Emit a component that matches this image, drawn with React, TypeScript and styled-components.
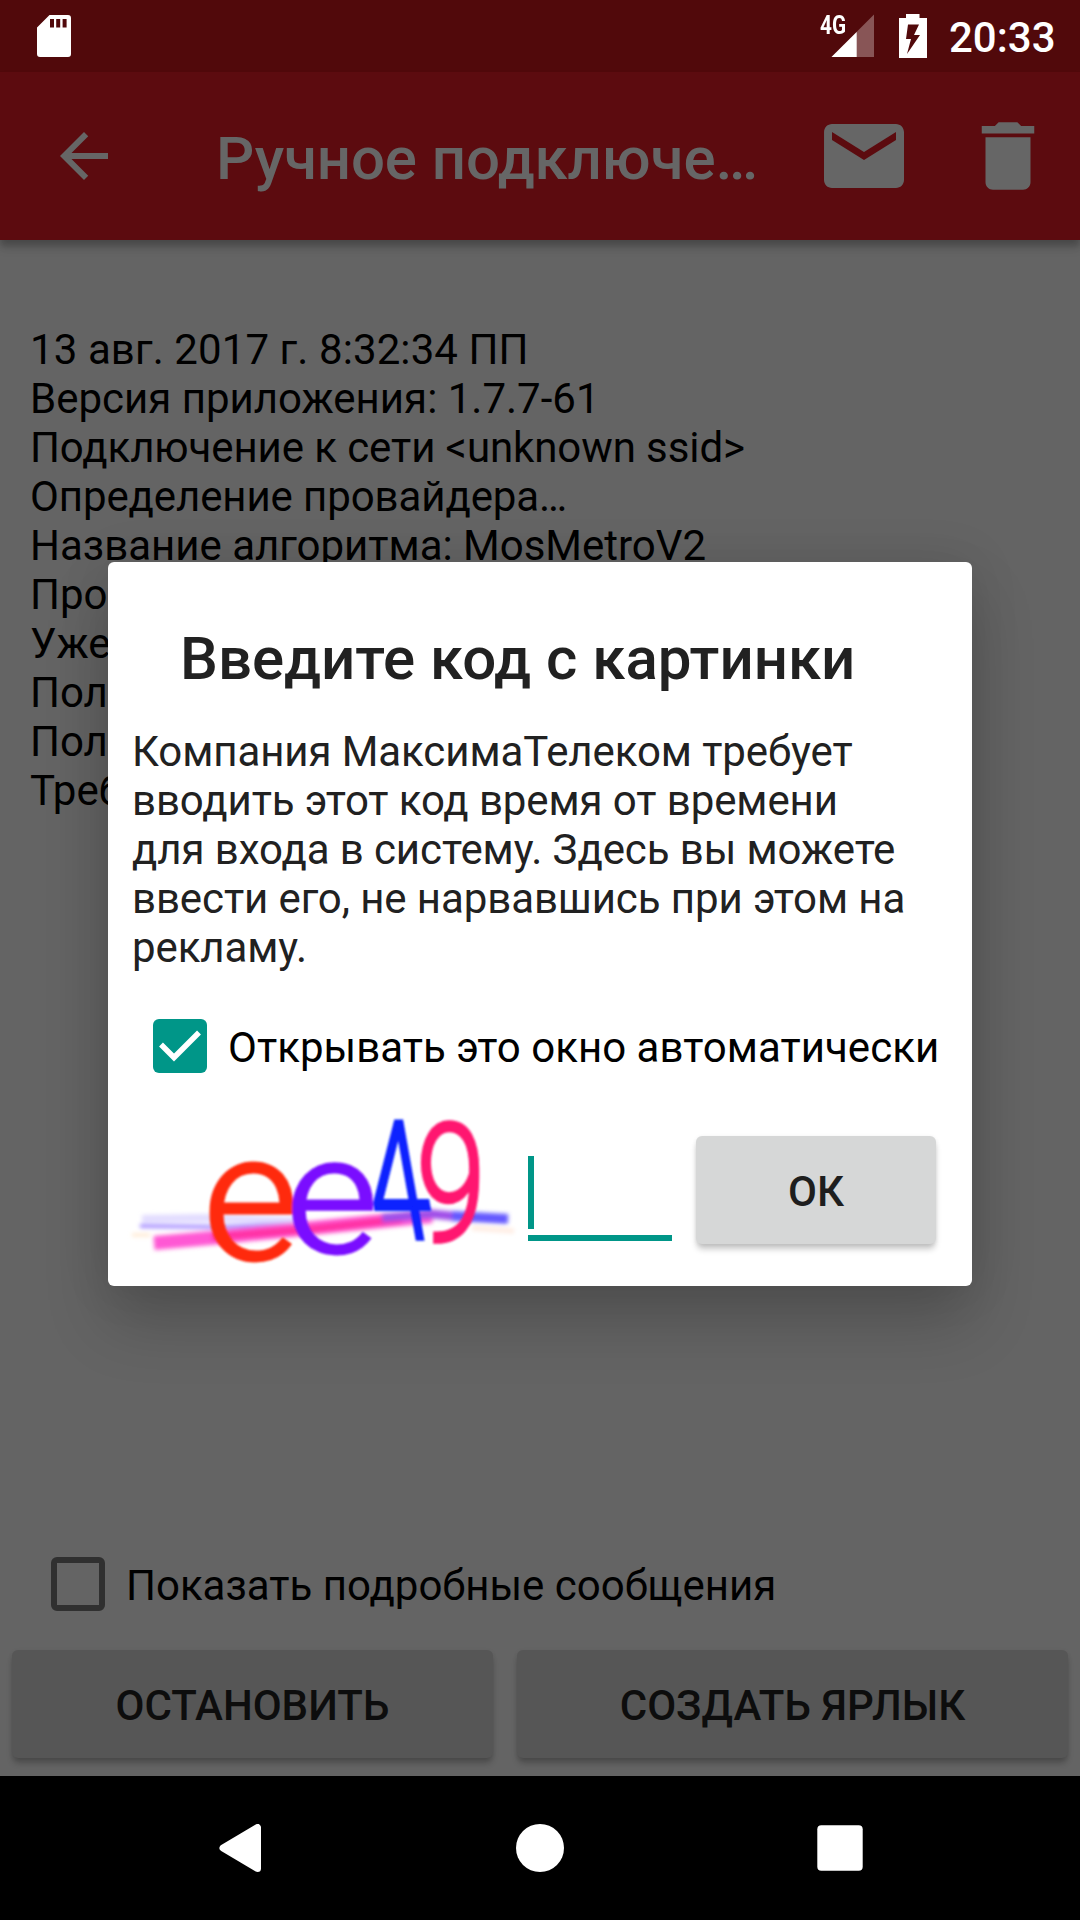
import React from 'react';
import styled, { createGlobalStyle } from 'styled-components';

const GlobalStyle = createGlobalStyle`
  *, *::before, *::after { box-sizing: border-box; }
  body {
    margin: 0;
    background: #000;
    font-family: Roboto, "Noto Sans", sans-serif;
  }
`;

const Screen = styled.div`
  position: relative;
  width: 1080px;
  height: 1920px;
  display: flex;
  flex-direction: column;
  overflow: hidden;
  background: #646464;
`;

const StatusBar = styled.header`
  flex: none;
  height: 72px;
  display: flex;
  align-items: flex-start;
  justify-content: space-between;
  padding: 0 24.5px 0 36px;
  background: #51090b;
  color: #fff;
`;

const StatusIcons = styled.div`
  display: flex;
  align-items: flex-start;
`;

const NetworkLabel = styled.span`
  width: 26px;
  margin-top: 11px;
  font-size: 25px;
  line-height: 29px;
  font-weight: 700;
  white-space: nowrap;
  transform: scaleX(0.83);
  transform-origin: 0 0;
`;

const SignalIcon = styled.svg`
  margin-left: -15px;
`;

const BatteryIcon = styled.svg`
  margin-left: 24px;
`;

const Clock = styled.time`
  margin: 13px 0 0 21px;
  font-size: 42px;
  line-height: 49px;
  font-weight: 500;
`;

const Toolbar = styled.div`
  flex: none;
  height: 168px;
  display: flex;
  align-items: center;
  padding: 0 27px 0 48px;
  background: #5c0b0f;
  color: #666;
  box-shadow: 0 6px 7px rgba(0, 0, 0, 0.24), 0 10px 10px rgba(0, 0, 0, 0.05);
`;

const ToolbarTitle = styled.h1`
  flex: 1;
  margin: 6px 0 0 96px;
  font-size: 60px;
  line-height: 70px;
  font-weight: 500;
  letter-spacing: -0.1px;
  white-space: nowrap;
`;

const ToolbarIcon = styled.svg<{ $size: number; $gap?: number }>`
  flex: none;
  width: ${(p) => p.$size}px;
  height: ${(p) => p.$size}px;
  margin-left: ${(p) => p.$gap ?? 0}px;
  fill: currentColor;
`;

const Log = styled.main`
  flex: 1;
  padding: 85px 30px 0;
  color: #000;
  font-size: 42px;
  line-height: 49px;
`;

const LogLine = styled.div<{ $tracking?: number }>`
  letter-spacing: ${(p) => p.$tracking ?? 0}px;
  white-space: nowrap;
`;

const CheckRow = styled.label<{ $left: number; $height: number; $tracking?: number }>`
  flex: none;
  height: ${(p) => p.$height}px;
  display: flex;
  align-items: flex-start;
  padding-left: ${(p) => p.$left}px;
  color: #000;
  font-size: 42px;
  line-height: 49px;
  letter-spacing: ${(p) => p.$tracking ?? 0}px;
  white-space: nowrap;
`;

const EmptyBox = styled.span`
  width: 54px;
  height: 54px;
  border: 6px solid #303030;
  border-radius: 6px;
`;

const CheckedBox = styled.span`
  width: 54px;
  height: 54px;
  border-radius: 6px;
  background: #009688;
  display: block;
`;

const CheckText = styled.span`
  margin: 4px 0 0 21px;
`;

const ButtonBar = styled.div`
  flex: none;
  height: 126px;
  display: flex;
  gap: 24px;
  padding: 0 12px;
`;

const RaisedButton = styled.button<{ $width: number; $dim?: boolean }>`
  flex: none;
  width: ${(p) => p.$width}px;
  height: 108px;
  padding: 2px 0 0;
  border: 0;
  border-radius: 6px;
  background: ${(p) => (p.$dim ? '#565656' : '#d6d7d7')};
  color: ${(p) => (p.$dim ? '#0d0d0d' : '#1e1e1e')};
  font: 500 42px/49px Roboto, "Noto Sans", sans-serif;
  box-shadow: 0 6px 6px -1px rgba(0, 0, 0, ${(p) => (p.$dim ? 0.24 : 0.22)}),
    0 1px 4px rgba(0, 0, 0, 0.08);
`;

const NavBar = styled.nav`
  position: relative;
  flex: none;
  height: 144px;
  display: flex;
  align-items: center;
  justify-content: center;
  gap: 252px;
  background: #000;
`;

const Dialog = styled.section`
  position: absolute;
  left: 108px;
  top: 562px;
  width: 864px;
  height: 724px;
  padding: 62px 24px 0;
  border-radius: 6px;
  background: #fff;
  box-shadow: 0 36px 64px rgba(0, 0, 0, 0.19), 0 0 50px rgba(0, 0, 0, 0.1);
`;

const DialogTitle = styled.h2`
  margin: 0 0 33px 48px;
  color: #212121;
  font-size: 60px;
  line-height: 70px;
  font-weight: 500;
  white-space: nowrap;
`;

const Message = styled.p`
  margin: 0 0 47px;
  color: #212121;
  font-size: 42px;
  line-height: 49px;
  letter-spacing: -0.09px;
  white-space: pre-line;
`;

const CodeRow = styled.div`
  display: flex;
  align-items: flex-start;
`;

const CodeImage = styled.svg`
  flex: none;
  overflow: visible;
`;

const CodeField = styled.div`
  width: 144px;
  height: 85px;
  margin: 38px 24px 0 12px;
  display: flex;
  flex-direction: column;
  justify-content: space-between;
  border-bottom: 6px solid #009688;
`;

const Caret = styled.span`
  width: 6px;
  height: 73px;
  background: #009688;
`;

const OkSlot = styled.div`
  margin-top: 18px;
`;

const logLines = [
  { text: '13 авг. 2017 г. 8:32:34 ПП', tracking: 0.09 },
  { text: 'Версия приложения: 1.7.7-61', tracking: 0 },
  { text: 'Подключение к сети <unknown ssid>', tracking: -0.09 },
  { text: 'Определение провайдера…', tracking: -0.1 },
  { text: 'Название алгоритма: MosMetroV2', tracking: 0 },
  { text: 'Про' },
  { text: 'Уже' },
  { text: 'Пол' },
  { text: 'Пол' },
  { text: 'Треб' },
];

const message = `Компания МаксимаТелеком требует
вводить этот код время от времени
для входа в систему. Здесь вы можете
ввести его, не нарвавшись при этом на
рекламу.`;

function CodePicture() {
  return (
    <CodeImage width="384" height="144" viewBox="0 0 384 144" fontFamily="Roboto, sans-serif">
      <defs>
        <filter id="soft" x="-5%" y="-20%" width="110%" height="140%">
          <feGaussianBlur stdDeviation="1.3" />
        </filter>
        <filter id="softer" x="-5%" y="-60%" width="110%" height="220%">
          <feGaussianBlur stdDeviation="2" />
        </filter>
      </defs>
      <g filter="url(#softer)" fill="none">
        <path d="M10 101 L70 100 L170 103" stroke="#e2dcff" strokeWidth="8" />
        <path d="M8 108 L90 109 L240 103" stroke="#a890ff" strokeWidth="4" />
        <path d="M22 125 L90 119 L180 110 L300 98" stroke="#ff58d4" strokeWidth="14" />
        <path d="M80 119 L180 111 L270 101" stroke="#ff30a4" strokeWidth="8" />
        <path d="M250 100 L300 96 L330 99" stroke="#a050e8" strokeWidth="9" />
        <path d="M320 98 L376 101" stroke="#6458ff" strokeWidth="10" />
        <path d="M340 110 L382 113" stroke="#ffece2" strokeWidth="5" />
        <path d="M0 117 L18 117" stroke="#ffe6cc" strokeWidth="3" />
      </g>
      <g filter="url(#soft)" fontWeight="300">
        <text transform="translate(71 140.500) scale(1.030 0.990)" fontSize="180" fill="#ff2a10" stroke="#ff2a10" strokeWidth="3">e</text>
        <text transform="translate(154 133.500) scale(0.990 0.920)" fontSize="180" fill="#7a10ff" stroke="#7a10ff" strokeWidth="3">e</text>
        <text transform="translate(245 121) skewX(10) scale(0.600 0.920)" fontSize="180" fill="#0a20ff" stroke="#0a20ff" strokeWidth="4">4</text>
        <text transform="translate(284 122.500) scale(0.700 0.915)" fontSize="180" fill="#ff1470" stroke="#ff1470" strokeWidth="4">9</text>
      </g>
    </CodeImage>
  );
}

export default function App() {
  return (
    <>
      <GlobalStyle />
      <Screen>
        <StatusBar>
          <svg width="36" height="72" viewBox="36 0 36 72">
            <path
              fill="#fff"
              fillRule="evenodd"
              d="M49.500 15H68a3 3 0 0 1 3 3V54a3 3 0 0 1-3 3H40a3 3 0 0 1-3-3V27.500ZM50 19v8.500h4V19ZM56.200 19v8.500h4V19ZM62.600 19v8.500h4V19Z"
            />
          </svg>
          <StatusIcons>
            <NetworkLabel>4G</NetworkLabel>
            <SignalIcon width="43" height="72" viewBox="831 0 43 72">
              <path fill="#885556" d="M874 14.500V57H831.500Z" />
              <path fill="#fff" d="M856.700 32V57H831.500Z" />
            </SignalIcon>
            <BatteryIcon width="30" height="72" viewBox="898 0 30 72">
              <path
                fill="#fff"
                fillRule="evenodd"
                d="M906 14h13.500v4H927V58H899V18h7ZM908 24.500l-2 14.500h5l-4 15 13-19h-6l5-10.500Z"
              />
            </BatteryIcon>
            <Clock>20:33</Clock>
          </StatusIcons>
        </StatusBar>

        <Toolbar>
          <ToolbarIcon $size={72} viewBox="0 0 24 24">
            <path d="M20 11H7.830l5.590-5.590L12 4l-8 8 8 8 1.410-1.410L7.830 13H20v-2z" />
          </ToolbarIcon>
          <ToolbarTitle>Ручное подключе…</ToolbarTitle>
          <ToolbarIcon $size={96} viewBox="0 0 24 24">
            <path d="M20 4H4c-1.100 0-1.990.9-1.990 2L2 18c0 1.100.9 2 2 2h16c1.100 0 2-.9 2-2V6c0-1.100-.9-2-2-2zm0 4l-8 5-8-5V6l8 5 8-5v2z" />
          </ToolbarIcon>
          <ToolbarIcon $size={90} $gap={51} viewBox="0 0 24 24">
            <path d="M6 19c0 1.100.9 2 2 2h8c1.100 0 2-.9 2-2V7H6v12zM19 4h-3.500l-1-1h-5l-1 1H5v2h14V4z" />
          </ToolbarIcon>
        </Toolbar>

        <Log>
          {logLines.map((line, i) => (
            <LogLine key={i} $tracking={line.tracking}>
              {line.text}
            </LogLine>
          ))}
        </Log>

        <CheckRow $left={51} $height={93}>
          <EmptyBox />
          <CheckText>Показать подробные сообщения</CheckText>
        </CheckRow>

        <ButtonBar>
          <RaisedButton $width={481} $dim>ОСТАНОВИТЬ</RaisedButton>
          <RaisedButton $width={551} $dim>СОЗДАТЬ ЯРЛЫК</RaisedButton>
        </ButtonBar>

        <NavBar>
          <svg width="48" height="48" viewBox="0 0 48 48">
            <path
              d="M41.500 3.500V44.500L7 24Z"
              fill="#fff"
              stroke="#fff"
              strokeWidth="7"
              strokeLinejoin="round"
            />
          </svg>
          <svg width="48" height="48" viewBox="0 0 48 48">
            <circle cx="24" cy="24" r="24" fill="#fff" />
          </svg>
          <svg width="48" height="48" viewBox="0 0 48 48">
            <rect x="1.300" y="1.300" width="45.400" height="45.400" rx="4" fill="#fff" />
          </svg>
        </NavBar>

        <Dialog>
          <DialogTitle>Введите код с картинки</DialogTitle>
          <Message>{message}</Message>
          <CheckRow $left={21} $height={99} $tracking={0.04}>
            <CheckedBox>
              <svg width="54" height="54" viewBox="0 0 54 54">
                <path d="M8 25.500L21 38.500L46 13.500" fill="none" stroke="#fff" strokeWidth="5.500" />
              </svg>
            </CheckedBox>
            <CheckText>Открывать это окно автоматически</CheckText>
          </CheckRow>
          <CodeRow>
            <CodePicture />
            <CodeField>
              <Caret />
            </CodeField>
            <OkSlot>
              <RaisedButton $width={240}>ОК</RaisedButton>
            </OkSlot>
          </CodeRow>
        </Dialog>
      </Screen>
    </>
  );
}
